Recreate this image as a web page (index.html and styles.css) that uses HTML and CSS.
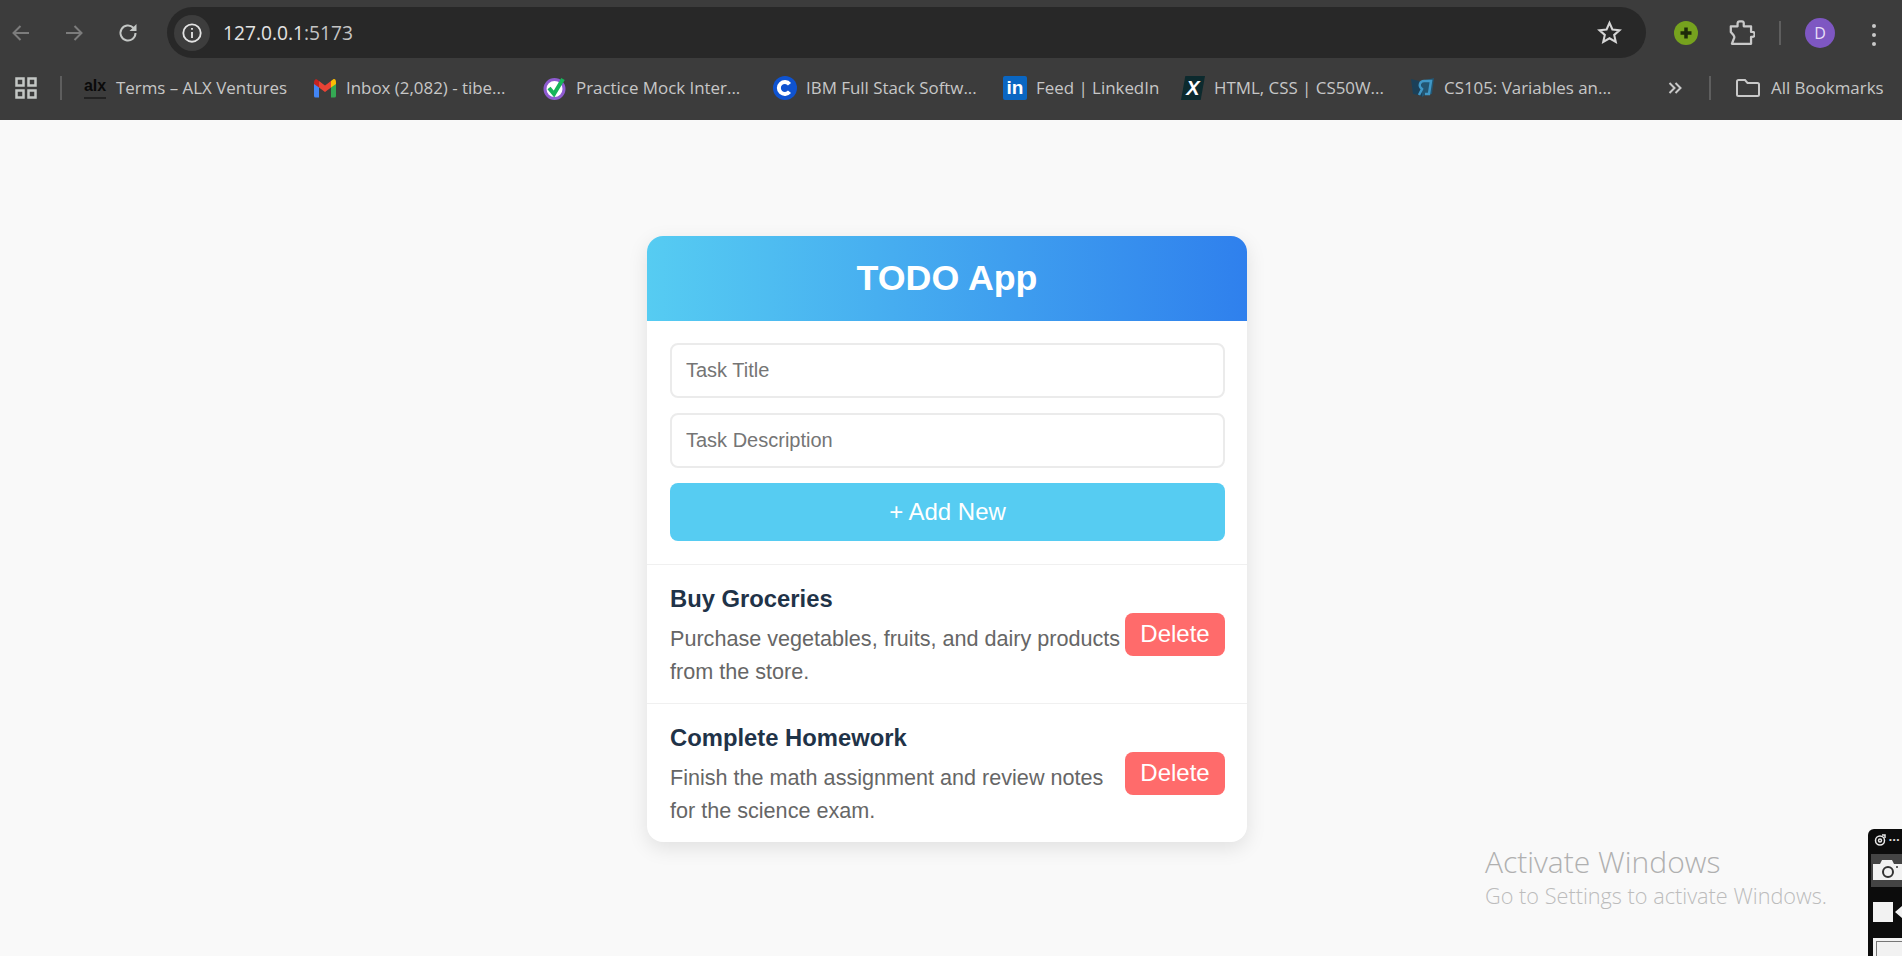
FILE: index.html
```html
<!DOCTYPE html>
<html lang="en">
<head>
    <meta charset="UTF-8">
    <meta name="viewport" content="width=device-width, initial-scale=1.0">
    <title>TODO App</title>
    <link rel="stylesheet" href="styles.css">
</head>
<body>
    <!-- Browser toolbar -->
    <div class="toolbar">
        <svg class="nav-icon nav-back" viewBox="0 0 24 24"><path d="M20 12H5M11.500 5L4.500 12l7 7"/></svg>
        <svg class="nav-icon nav-forward" viewBox="0 0 24 24"><path d="M4 12h15M12.500 5l7 7-7 7"/></svg>
        <svg class="nav-icon nav-reload" viewBox="0 0 24 24"><path d="M19.500 12a7.500 7.500 0 1 1-2.200-5.300L19.500 9"/><path class="solid" d="M20.500 3v7H13.500z"/></svg>
        <div class="omnibox">
            <span class="info-bubble">
                <svg class="info-icon" viewBox="0 0 24 24"><circle cx="12" cy="12" r="9.500"/><path d="M12 11v6.500M12 6.500v2"/></svg>
            </span>
            <span class="url">127.0.0.1<span class="url-port">:5173</span></span>
            <svg class="star-icon" viewBox="0 0 24 24"><path d="M12 2.800l2.800 6.300 6.800.7-5.100 4.500 1.500 6.700-6-3.500-6 3.500 1.500-6.700-5.100-4.500 6.800-.7z"/></svg>
        </div>
        <svg class="ext-green" viewBox="0 0 24 24"><circle cx="12" cy="12" r="12"/><path d="M12 6.500v11M6.500 12h11"/></svg>
        <svg class="puzzle-icon" viewBox="0 0 24 24"><path d="M2.500 6.500h6V4a2 2 0 0 1 2-2h2a1.500 1.500 0 0 1 1.500 1.500v3h6.500v5h1a2.200 2.200 0 0 1 0 4.400h-1V22H3.500l1.500-4a3 3 0 0 0 0-3.500l-2.500-3z" stroke-linejoin="round"/></svg>
        <span class="toolbar-sep"></span>
        <span class="avatar">D</span>
        <span class="menu-dots"><i></i><i></i><i></i></span>
    </div>

    <!-- Bookmarks bar -->
    <div class="bookmarks">
        <svg class="apps-icon" viewBox="0 0 22 22"><path d="M1.500 1.500h7v7h-7zM13.500 1.500h7v7h-7zM1.500 13.500h7v7h-7zM13.500 13.500h7v7h-7z"/></svg>
        <span class="bar-sep"></span>
        <div class="bm-list">
            <a class="bm">
                <span class="fav fav-alx">alx<i></i></span>
                Terms – ALX Ventures
            </a>
            <a class="bm">
                <svg class="fav" viewBox="0 0 24 24">
                    <path fill="#4285f4" d="M1 6v14a1.500 1.500 0 0 0 1.500 1.500H6V10z"/>
                    <path fill="#34a853" d="M18 10v11.500h3.500A1.500 1.500 0 0 0 23 20V6z"/>
                    <path fill="#ea4335" d="M6 5v6.500l6 4.500 6-4.500V5l-6 4.500z"/>
                    <path fill="#c5221f" d="M1 6.500V8l5 3.500V5L4 3.500C2.500 2.500 1 3.800 1 6.500z"/>
                    <path fill="#fbbc04" d="M23 6.500V8l-5 3.500V5l2-1.500c1.500-1 3-.3 3 3z"/>
                </svg>
                Inbox (2,082) - tibe...
            </a>
            <a class="bm">
                <svg class="fav" viewBox="0 0 24 24">
                    <circle cx="11.500" cy="13" r="9.500" fill="#fff" stroke="#8e5bd0" stroke-width="3"/>
                    <path fill="none" stroke="#17b45a" stroke-width="4" d="M6 12l5 6 9-15"/>
                </svg>
                Practice Mock Inter...
            </a>
            <a class="bm">
                <svg class="fav" viewBox="0 0 24 24">
                    <circle cx="12" cy="12" r="12" fill="#0f53d0"/>
                    <path fill="none" stroke="#fff" stroke-width="4" d="M16.500 8.200a6 6 0 1 0 0 7.600"/>
                </svg>
                IBM Full Stack Softw...
            </a>
            <a class="bm bm-short">
                <span class="fav fav-in">in</span>
                Feed | LinkedIn
            </a>
            <a class="bm">
                <span class="fav fav-x">X</span>
                HTML, CSS | CS50W...
            </a>
            <a class="bm bm-last">
                <svg class="fav" viewBox="0 0 24 24">
                    <path fill="#1b4058" d="M0 3l8 2 3 2v14l-3-2-6-1z"/>
                    <path fill="#235571" d="M23 2l-9 2-3 3v14l3-2 7-1z"/>
                    <path fill="none" stroke="#3f97c6" stroke-width="2.500" d="M8 19l3-6c-4-3-2-8 2-8h7l-2 13h-4"/>
                </svg>
                CS105: Variables an...
            </a>
        </div>
        <svg class="more-icon" viewBox="0 0 16 16"><path d="M2.500 3l5 5-5 5M8.500 3l5 5-5 5"/></svg>
        <span class="bar-sep bar-sep-right"></span>
        <a class="bm-all">
            <svg class="folder-icon" viewBox="0 0 24 18"><path d="M1 2.500A1.500 1.500 0 0 1 2.500 1H9l2.500 3h10A1.500 1.500 0 0 1 23 5.500v10a1.500 1.500 0 0 1-1.500 1.500h-19A1.500 1.500 0 0 1 1 15.500z"/></svg>
            All Bookmarks
        </a>
    </div>

    <!-- App -->
    <main class="page">
        <div class="todo-card">
            <h1 class="todo-header">TODO App</h1>

            <form class="todo-form">
                <input class="todo-input" type="text" placeholder="Task Title">
                <input class="todo-input" type="text" placeholder="Task Description">
                <button class="add-button" type="button">+ Add New</button>
            </form>

            <div class="todo-item">
                <div class="todo-text">
                    <h3>Buy Groceries</h3>
                    <p>Purchase vegetables, fruits, and dairy products from the store.</p>
                </div>
                <button class="delete-button" type="button">Delete</button>
            </div>

            <div class="todo-item">
                <div class="todo-text">
                    <h3>Complete Homework</h3>
                    <p>Finish the math assignment and review notes for the science exam.</p>
                </div>
                <button class="delete-button" type="button">Delete</button>
            </div>
        </div>
    </main>

    <!-- Things floating over the page -->
    <div class="activate">
        <div class="activate-title">Activate Windows</div>
        <div class="activate-sub">Go to Settings to activate Windows.</div>
    </div>

    <div class="capture-widget">
        <div class="capture-top">
            <svg class="capture-logo" viewBox="0 0 12 12"><circle cx="6" cy="6.500" r="4.500"/><circle cx="6" cy="6.500" r="1.500"/><path d="M8 1l3 0 0 3"/></svg>
            <span class="capture-dots">•••</span>
        </div>
        <div class="capture-row capture-row-on">
            <svg class="capture-icon" viewBox="0 0 29 20"><path class="cam-body" d="M0 4h7l2-4h10l2 4h8v16H0z"/><circle class="cam-lens" cx="15" cy="12" r="5"/><circle cx="24" cy="7" r="1" fill="#333"/></svg>
        </div>
        <div class="capture-row">
            <svg class="capture-icon" viewBox="0 0 29 20"><path class="cam-body" d="M0 0h20v20H0zM22 10l7-6v12z"/></svg>
        </div>
        <div class="capture-frame"></div>
    </div>
</body>
</html>
```

FILE: styles.css
```css
* {
    box-sizing: border-box;
}

html, body {
    height: 100%;
}

body {
    margin: 0;
    height: 956px;
    overflow: hidden;
    position: relative;
    font-family: "Liberation Sans", Arial, sans-serif;
    background-color: #f9f9f9;
}

/* Browser toolbar */
.toolbar {
    height: 65px;
    padding: 7px 0 0 0;
    display: flex;
    align-items: flex-start;
    background-color: #3c3c3c;
}

.nav-icon {
    width: 24px;
    height: 24px;
    margin-top: 14px;
    fill: none;
    stroke: #c4c7c5;
    stroke-width: 2;
}

.nav-icon .solid {
    fill: #c4c7c5;
    stroke: none;
}

.nav-back {
    margin-left: 9px;
    stroke: #7c7c7c;
}

.nav-forward {
    margin-left: 29px;
    stroke: #7c7c7c;
}

.nav-reload {
    margin-left: 30px;
}

.omnibox {
    width: 1479px;
    height: 51px;
    margin-left: 27px;
    padding: 0 24px 0 7px;
    display: flex;
    align-items: center;
    border-radius: 26px;
    background-color: #282828;
}

.info-bubble {
    width: 36px;
    height: 36px;
    display: flex;
    align-items: center;
    justify-content: center;
    border-radius: 50%;
    background-color: #3d3d3d;
}

.info-icon {
    width: 22px;
    height: 22px;
    fill: none;
    stroke: #e3e3e3;
    stroke-width: 2;
}

.url {
    margin-left: 13px;
    flex: 1;
    font-family: "Open Sans", sans-serif;
    font-size: 19.200px;
    color: #e3e3e3;
}

.url-port {
    color: #c4c4c4;
}

.star-icon {
    width: 25px;
    height: 25px;
    fill: none;
    stroke: #d5d5d5;
    stroke-width: 2;
}

.ext-green {
    width: 24px;
    height: 24px;
    margin: 14px 0 0 28px;
    fill: #76a21e;
    stroke: #1e2a0a;
    stroke-width: 0;
}

.ext-green path {
    stroke-width: 3.500;
}

.puzzle-icon {
    width: 27px;
    height: 27px;
    margin: 12px 0 0 30px;
    fill: none;
    stroke: #c9c9c9;
    stroke-width: 2;
}

.toolbar-sep {
    width: 2px;
    height: 24px;
    margin: 14px 0 0 24px;
    background-color: #5e5e5e;
}

.avatar {
    width: 30px;
    height: 30px;
    margin: 11px 0 0 24px;
    display: flex;
    align-items: center;
    justify-content: center;
    border-radius: 50%;
    background-color: #7e57c2;
    color: #e8def8;
    font-family: "Open Sans", sans-serif;
    font-size: 16px;
}

.menu-dots {
    margin: 17px 0 0 37px;
    display: flex;
    flex-direction: column;
    gap: 5px;
}

.menu-dots i {
    width: 4px;
    height: 4px;
    border-radius: 50%;
    background-color: #c9c9c9;
}

/* Bookmarks bar */
.bookmarks {
    height: 55px;
    padding: 0 0 11px 15px;
    display: flex;
    align-items: center;
    background-color: #3c3c3c;
    font-family: "Open Sans", sans-serif;
    font-size: 16.900px;
    color: #c7c7c7;
}

.apps-icon {
    width: 22px;
    height: 22px;
    margin-top: 2px;
    fill: none;
    stroke: #c4c7c5;
    stroke-width: 2.500;
    flex: none;
}

.bar-sep {
    width: 2px;
    height: 24px;
    margin-top: 2px;
    margin-left: 23px;
    flex: none;
    background-color: #5e5e5e;
}

.bar-sep-right {
    margin-left: 26px;
}

.bm-list {
    margin-left: 21px;
    display: flex;
    flex: none;
}

.bm {
    width: 230px;
    display: flex;
    align-items: center;
    gap: 9px;
    white-space: nowrap;
}

.bm-short {
    width: 178px;
}

.bm-last {
    width: 256px;
}

.fav {
    width: 24px;
    height: 24px;
    margin-top: 2px;
    flex: none;
}

.fav-alx {
    position: relative;
    display: flex;
    justify-content: center;
    color: #0a0a0a;
    font-family: "Liberation Sans", sans-serif;
    font-weight: bold;
    font-size: 16px;
    line-height: 19px;
}

.fav-alx i {
    position: absolute;
    left: 1px;
    right: 1px;
    bottom: 1px;
    height: 2px;
    background-color: #222;
}

.fav-in {
    display: flex;
    align-items: center;
    justify-content: center;
    border-radius: 2px;
    background-color: #0a66c2;
    color: #fff;
    font-family: "Liberation Sans", sans-serif;
    font-weight: bold;
    font-size: 19px;
}

.fav-x {
    display: flex;
    align-items: center;
    justify-content: center;
    background-color: #0c2a2e;
    clip-path: polygon(18% 0, 100% 0, 82% 100%, 0 100%);
    color: #fff;
    font-family: "Liberation Sans", sans-serif;
    font-style: italic;
    font-weight: bold;
    font-size: 20px;
}

.more-icon {
    width: 16px;
    height: 16px;
    margin-top: 2px;
    fill: none;
    stroke: #c9c9c9;
    stroke-width: 2;
    flex: none;
}

.bm-all {
    margin-left: 25px;
    display: flex;
    align-items: center;
    gap: 11px;
    white-space: nowrap;
}

.folder-icon {
    width: 24px;
    height: 18px;
    margin-top: 2px;
    fill: none;
    stroke: #c9c9c9;
    stroke-width: 2;
}

/* App */
.page {
    padding: 116px 8px 0 0;
    display: flex;
    justify-content: center;
}

.todo-card {
    width: 600px;
    border-radius: 16px;
    overflow: hidden;
    background-color: #fff;
    box-shadow: 0 6px 20px rgba(0, 0, 0, 0.1);
}

.todo-header {
    margin: 0;
    height: 85px;
    padding-bottom: 1px;
    display: flex;
    align-items: center;
    justify-content: center;
    background: linear-gradient(to right, #56ccf2, #2f80ed);
    color: #fff;
    font-size: 35.800px;
}

.todo-form {
    padding: 22px 22px 23px 23px;
    display: flex;
    flex-direction: column;
    gap: 15px;
}

.todo-input {
    height: 55px;
    padding: 0 14px;
    border: 2px solid #ebebeb;
    border-radius: 8px;
    font-family: inherit;
    font-size: 20px;
    outline: none;
}

.todo-input::placeholder {
    color: #757575;
}

.add-button {
    height: 58px;
    border: none;
    border-radius: 8px;
    background-color: #56ccf2;
    color: #fff;
    font-family: inherit;
    font-size: 24px;
}

.todo-item {
    height: 139px;
    padding: 0 22px 0 23px;
    display: flex;
    align-items: center;
    gap: 2px;
    border-top: 1px solid #f0f0f0;
}

.todo-text {
    flex: 1;
}

.todo-text h3 {
    margin: 0 0 5px;
    color: #1f3348;
    font-size: 23.800px;
    line-height: 37px;
}

.todo-text p {
    margin: 0;
    color: #666;
    font-size: 21.600px;
    line-height: 33px;
}

.delete-button {
    width: 100px;
    height: 43px;
    flex: none;
    padding: 0;
    border: none;
    border-radius: 8px;
    background-color: #ff6b6b;
    color: #fff;
    font-family: inherit;
    font-size: 24px;
}

/* Watermark */
.activate {
    position: absolute;
    left: 1485px;
    top: 842px;
    font-family: "Open Sans", sans-serif;
    font-weight: 300;
    color: #b0b0b0;
    white-space: nowrap;
}

.activate-title {
    font-size: 30px;
    line-height: 39px;
}

.activate-sub {
    font-size: 21.700px;
    line-height: 30px;
    color: #bcbcbc;
}

/* Screen capture widget at the right edge */
.capture-widget {
    position: absolute;
    left: 1868px;
    top: 829px;
    width: 34px;
    height: 127px;
    overflow: hidden;
    border-top-left-radius: 6px;
    background-color: #0c0c0c;
}

.capture-top {
    height: 25px;
    padding: 5px 0 0 6px;
    display: flex;
    align-items: flex-start;
    gap: 3px;
}

.capture-logo {
    width: 12px;
    height: 12px;
    fill: none;
    stroke: #e8e8e8;
    stroke-width: 1.500;
    flex: none;
}

.capture-dots {
    color: #ddd;
    font-size: 8px;
    line-height: 12px;
    letter-spacing: 1px;
    white-space: nowrap;
}

.capture-row {
    margin-left: 3px;
    padding: 15px 0 0 2px;
}

.capture-row-on {
    height: 33px;
    padding-top: 6px;
    background-color: #444;
}

.capture-icon {
    width: 29px;
    height: 20px;
    display: block;
}

.cam-body {
    fill: #f2f2f2;
}

.cam-lens {
    fill: none;
    stroke: #333;
    stroke-width: 2;
}

.capture-frame {
    width: 40px;
    height: 30px;
    margin: 16px 0 0 5px;
    border: 3px solid #f2f2f2;
    background-color: #f2f2f2;
    box-shadow: inset 0 0 0 1px #777;
}
```
